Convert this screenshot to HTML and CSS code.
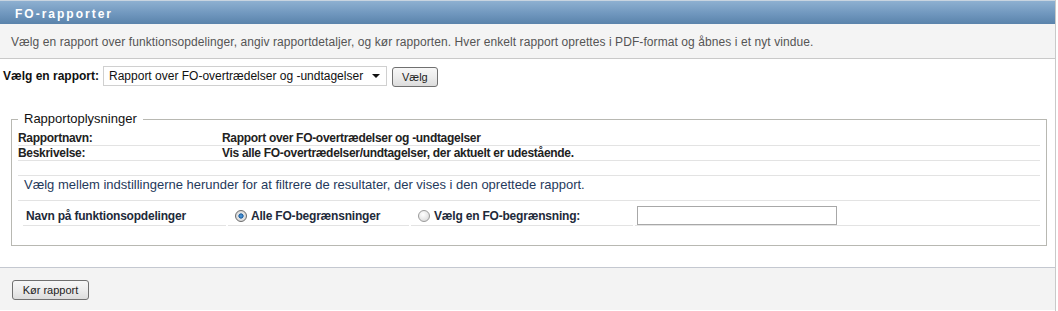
FILE: index.html
```html
<!DOCTYPE html>
<html lang="da">
<head>
    <meta charset="UTF-8">
    <title>FO-rapporter</title>
    <link rel="stylesheet" href="styles.css">
</head>
<body>

    <div class="panel">
        <!-- Header -->
        <div class="panel-head">FO-rapporter</div>

        <div class="panel-desc">
            Vælg en rapport over funktionsopdelinger, angiv rapportdetaljer, og kør rapporten. Hver enkelt rapport oprettes i PDF-format og åbnes i et nyt vindue.
        </div>

        <div class="panel-body">
            <div class="chooser">
                <label class="chooser-label" for="reportSelect">Vælg en rapport:</label>
                <span class="select-wrap">
                    <select id="reportSelect" class="report-select">
                        <option>Rapport over FO-overtrædelser og -undtagelser</option>
                    </select>
                </span>
                <button class="btn">Vælg</button>
            </div>

            <fieldset class="details">
                <legend>Rapportoplysninger</legend>

                <div class="info-row">
                    <span class="info-label">Rapportnavn:</span>
                    <span class="info-value">Rapport over FO-overtrædelser og -undtagelser</span>
                </div>
                <div class="info-row">
                    <span class="info-label">Beskrivelse:</span>
                    <span class="info-value">Vis alle FO-overtrædelser/undtagelser, der aktuelt er udestående.</span>
                </div>

                <div class="hint">Vælg mellem indstillingerne herunder for at filtrere de resultater, der vises i den oprettede rapport.</div>

                <div class="option-row">
                    <div class="cell cell-label">Navn på funktionsopdelinger</div>
                    <div class="cell cell-radio">
                        <label><input type="radio" name="fo" checked> Alle FO-begrænsninger</label>
                    </div>
                    <div class="cell cell-radio">
                        <label><input type="radio" name="fo"> Vælg en FO-begrænsning:</label>
                    </div>
                    <div class="cell cell-input">
                        <input type="text" class="text-input">
                    </div>
                </div>
            </fieldset>
        </div>

        <div class="panel-foot">
            <button class="btn">Kør rapport</button>
        </div>
    </div>

</body>
</html>
```

FILE: styles.css
```css
body {
    margin: 0;
    padding: 0;
    background-color: #fff;
    font-family: "Liberation Sans", Arial, sans-serif;
    font-size: 12px;
    color: #222;
}

.panel {
    width: 1055px;
    height: 311px;
    border-right: 1px solid #c9c9c9;
    background-color: #fff;
}

.panel-head {
    height: 24px;
    box-sizing: border-box;
    padding: 3px 0 0 15px;
    line-height: 20px;
    background: linear-gradient(to bottom, #8eb0d1 0%, #7097be 55%, #5a83ab 100%);
    border-top: 1px solid #c8d4e0;
    color: #fff;
    font-weight: bold;
    font-size: 12px;
    letter-spacing: 2px;
}

.panel-desc {
    height: 35px;
    box-sizing: border-box;
    padding: 11px 11px 0;
    line-height: 14px;
    background-color: #f4f4f4;
    border-bottom: 1px solid #c9c9c9;
    color: #555;
    letter-spacing: 0.08px;
}

.panel-body {
    padding-top: 7px;
    height: 201px;
}

.chooser {
    display: flex;
    align-items: center;
    height: 20px;
    padding-left: 3px;
}

.chooser-label {
    font-weight: bold;
    color: #111;
    margin-right: 4px;
}

.select-wrap {
    position: relative;
    display: inline-block;
}

.select-wrap::after {
    content: "";
    position: absolute;
    right: 7px;
    top: 8px;
    border-left: 4px solid transparent;
    border-right: 4px solid transparent;
    border-top: 4px solid #111;
    pointer-events: none;
}

.report-select {
    appearance: none;
    -webkit-appearance: none;
    width: 284px;
    height: 20px;
    margin: 0;
    padding: 0 0 0 5px;
    border: 1px solid #d0d0d0;
    border-radius: 0;
    background-color: #fff;
    font-family: inherit;
    font-size: 12px;
    color: #111;
}

.btn {
    height: 20px;
    margin: 1px 0 0 5px;
    padding: 0 9px;
    border: 1px solid #707070;
    border-radius: 3px;
    background: linear-gradient(to bottom, #f7f7f7 0%, #ececec 50%, #dcdcdc 100%);
    font-family: inherit;
    font-size: 11px;
    color: #222;
}

.details {
    margin: 26px 8px 21px 11px;
    padding: 5px 6px 19px;
    border: 1px solid #b8b8b2;
    min-width: 0;
}

.details legend {
    padding: 0 6px;
    font-size: 13px;
    line-height: 14px;
    color: #111;
}

.info-row {
    display: flex;
    line-height: 14px;
    border-bottom: 1px solid #e3e3e3;
    font-weight: bold;
    letter-spacing: -0.3px;
    color: #222;
}

.info-label {
    width: 204px;
}

.hint {
    margin-top: 14px;
    padding: 2px 6px 8px;
    line-height: 14px;
    font-size: 13px;
    border-top: 1px solid #e3e3e3;
    border-bottom: 1px solid #e3e3e3;
    color: #1f3a5c;
}

.option-row {
    display: grid;
    grid-template-columns: 203px 181px 222px 1fr;
    column-gap: 2px;
    margin-left: 5px;
}

.cell {
    display: flex;
    align-items: flex-end;
    height: 24px;
    border-bottom: 1px solid #e3e3e3;
    font-weight: bold;
    letter-spacing: -0.2px;
    line-height: 14px;
    color: #1e2a3a;
}

.cell-label {
    padding: 0 0 2px 3px;
    height: 22px;
}

.cell-radio {
    padding: 0 0 2px 7px;
    height: 22px;
}

.cell-radio label {
    display: flex;
    align-items: center;
}

.cell-radio input {
    appearance: none;
    -webkit-appearance: none;
    width: 12px;
    height: 12px;
    margin: 0 4px 0 0;
    border: 1px solid #9a9a9a;
    border-radius: 50%;
    background: radial-gradient(circle at 40% 35%, #ffffff 0%, #e6e6e6 60%, #c9c9c9 100%);
}

.cell-radio input:checked {
    background: radial-gradient(circle, #5aa5e8 0%, #1d5fa0 32%, #e8e8e8 42%, #c4c4c4 100%);
    border-color: #6c6c6c;
}

.cell-input {
    padding-left: 2px;
}

.text-input {
    width: 200px;
    height: 19px;
    box-sizing: border-box;
    margin: 0;
    border: 1px solid #a8a8a8;
    border-radius: 0;
    padding: 0 3px;
    background-color: #fff;
}

.panel-foot {
    height: 43px;
    box-sizing: border-box;
    padding: 11px 0 0 7px;
    border-top: 1px solid #c4c8d0;
    background-color: #f3f3f3;
}

.panel-foot .btn {
    width: 77px;
    padding: 0;
}
```
